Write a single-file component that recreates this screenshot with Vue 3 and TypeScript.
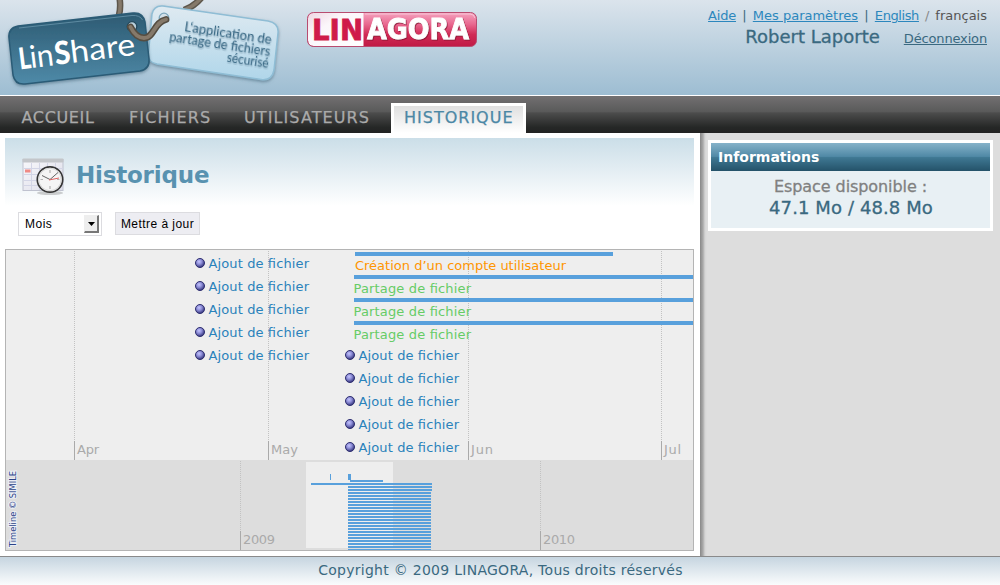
<script setup lang="ts">
interface NavItem {
  label: string
  key: string
  active?: boolean
}

const navItems: NavItem[] = [
  { label: 'ACCUEIL', key: 'home' },
  { label: 'FICHIERS', key: 'files' },
  { label: 'UTILISATEURS', key: 'users' },
  { label: 'HISTORIQUE', key: 'history', active: true },
]

interface PointEvent {
  x: number
  y: number
}

const rowStep = 23
const points: PointEvent[] = [
  ...Array.from({ length: 5 }, (_, i) => ({ x: 200, y: 263 + i * rowStep })),
  ...Array.from({ length: 5 }, (_, i) => ({ x: 350, y: 355 + i * rowStep })),
]

const months = [
  { label: 'Apr', x: 74, width: 22 },
  { label: 'May', x: 268, width: 27 },
  { label: 'Jun', x: 468, width: 22 },
  { label: 'Jul', x: 661, width: 17 },
]

const years = [
  { label: '2009', x: 240 },
  { label: '2010', x: 540 },
]

const shares = [275, 298, 321]
const overviewBars = Array.from({ length: 22 }, (_, i) => ({
  y: 486 + i * 3,
  width: i < 2 ? 84 : 83,
}))
</script>

<template>
  <div class="page">
    <header class="header">
      <svg class="logo" width="290" height="95" viewBox="0 0 290 95">
        <defs>
          <linearGradient id="tagDark" x1="0" y1="0" x2="0" y2="1">
            <stop offset="0" stop-color="#2c5a72" />
            <stop offset="1" stop-color="#4f8aa8" />
          </linearGradient>
          <linearGradient id="tagLight" x1="0" y1="0" x2="0" y2="1">
            <stop offset="0" stop-color="#dfeaf1" />
            <stop offset="1" stop-color="#b0d6ea" />
          </linearGradient>
          <filter id="tagShadow" x="-10%" y="-10%" width="120%" height="130%">
            <feDropShadow dx="0" dy="1.5" stdDeviation="1.5" flood-color="#3f6276" flood-opacity="0.6" />
          </filter>
          <filter id="textShadow" x="-10%" y="-10%" width="120%" height="130%">
            <feDropShadow dx="0.5" dy="1.5" stdDeviation="0.7" flood-color="#5b8098" flood-opacity="0.5" />
          </filter>
        </defs>
        <path d="M119.500 -2 Q121 7 119 15" fill="none" stroke="#5d564b" stroke-width="6.500" />
        <path d="M119.500 -2 Q121 7 119 15" fill="none" stroke="#85796a" stroke-width="3.500" />
        <path d="M202 -3 Q195 6 184 10" fill="none" stroke="#5d564b" stroke-width="6.500" />
        <path d="M202 -3 Q195 6 184 10" fill="none" stroke="#85796a" stroke-width="3.500" />
        <path
          d="M163 6 L268 21 Q279 23 278 33 L274 70 Q272 81 261 79.500 L157 64 Q147 62 148.500 53 L152 14 Q154 5 163 6 Z"
          fill="url(#tagLight)" stroke="#8fbdd5" stroke-width="1.500" filter="url(#tagShadow)"
        />
        <path
          d="M18 26 L133 13 Q143 12 145 22 L149 59 Q150 69 140 71 L25 84 Q15 85 13 75 L9 38 Q8 28 18 26 Z"
          fill="url(#tagDark)" stroke="#2b5b76" stroke-width="1.500" filter="url(#tagShadow)"
        />
        <path d="M19 28 L132 15.500 Q140 15 142.500 20" fill="none" stroke="#5d8ba2" stroke-width="1" />
        <circle cx="132" cy="26.500" r="4.800" fill="#b9cfdb" stroke="#24495c" stroke-width="1.300" />
        <circle cx="164" cy="18" r="4.800" fill="#d2e0e8" stroke="#7ba5ba" stroke-width="1.300" />
        <path d="M130.500 27 Q136 38 144 38 C154 38 154 22 166 19.500" fill="none" stroke="#554d41" stroke-width="6.800" stroke-linecap="round" />
        <path d="M130.500 27 Q136 38 144 38 C154 38 154 22 166 19.500" fill="none" stroke="#85796a" stroke-width="3.800" stroke-linecap="round" />
        <g transform="translate(20 69.500) rotate(-7.200)" class="brand">
          <text x="0" y="0" font-weight="900" font-size="30" textLength="12" lengthAdjust="spacingAndGlyphs">L</text>
          <text x="11" y="0" font-size="31" textLength="24" lengthAdjust="spacingAndGlyphs">in</text>
          <text x="36" y="0" font-weight="900" font-size="32" textLength="16" lengthAdjust="spacingAndGlyphs">S</text>
          <text x="52" y="0" font-size="31" textLength="65" lengthAdjust="spacingAndGlyphs">hare</text>
        </g>
        <g transform="translate(271 44) rotate(8.500)" class="slogan" filter="url(#textShadow)">
          <text x="0" y="0" textLength="88" lengthAdjust="spacingAndGlyphs">L‘application de</text>
          <text x="0.500" y="12" textLength="102" lengthAdjust="spacingAndGlyphs">partage de fichiers</text>
          <text x="0.500" y="24" textLength="42" lengthAdjust="spacingAndGlyphs">sécurisé</text>
        </g>
      </svg>

      <svg class="company" width="172" height="37" viewBox="306 11 172 37">
        <defs>
          <linearGradient id="badgeRed" x1="0" y1="0" x2="0" y2="1">
            <stop offset="0" stop-color="#f5a3bf" />
            <stop offset="0.350" stop-color="#e8678e" />
            <stop offset="0.650" stop-color="#d02a55" />
            <stop offset="1" stop-color="#c01a45" />
          </linearGradient>
          <linearGradient id="badgeWhite" x1="0" y1="0" x2="1" y2="1">
            <stop offset="0" stop-color="#efd6e3" />
            <stop offset="0.350" stop-color="#fbf6fa" />
            <stop offset="1" stop-color="#fff" />
          </linearGradient>
          <filter id="letterShadow" x="-5%" y="-5%" width="110%" height="120%">
            <feDropShadow dx="0.8" dy="1" stdDeviation="0.5" flood-color="#80102f" flood-opacity="0.8" />
          </filter>
        </defs>
        <rect x="307.500" y="12.500" width="169" height="34" rx="6" fill="url(#badgeRed)" />
        <path d="M363.500 13 H314 Q308 13 308 19 V40 Q308 46 314 46 H363.500 Z" fill="url(#badgeWhite)" />
        <rect x="307.500" y="12.500" width="169" height="34" rx="6" fill="none" stroke="#b84c70" stroke-width="1" />
        <path d="M365 14 H470 Q474 14 475 18" fill="none" stroke="#f8c4d5" stroke-width="1" />
        <g class="badge-text">
          <text x="312" y="39.500" fill="#cf1b49" stroke="#cf1b49" textLength="51" lengthAdjust="spacingAndGlyphs">LIN</text>
          <text x="367" y="39" fill="#fff" stroke="#fff" textLength="102" lengthAdjust="spacingAndGlyphs" filter="url(#letterShadow)">AGORA</text>
        </g>
      </svg>

      <div class="account">
        <div class="links">
          <a class="help">Aide</a><span class="bar">|</span><a>Mes paramètres</a><span class="bar">|</span><a class="english">English</a><span class="slash">/</span><span class="current">français</span>
        </div>
        <div class="user">
          <span class="name">Robert Laporte</span>
          <a class="logout">Déconnexion</a>
        </div>
      </div>
    </header>

    <nav class="nav">
      <a v-for="item in navItems" :key="item.key" class="tab" :class="[item.key, { active: item.active }]">{{ item.label }}</a>
    </nav>

    <div class="body">
      <main class="main">
        <div class="title-block">
          <div class="title">
            <svg width="44" height="40" viewBox="0 0 44 40">
              <defs>
                <linearGradient id="sheet" x1="0" y1="0" x2="1" y2="1">
                  <stop offset="0" stop-color="#f8f8fb" />
                  <stop offset="1" stop-color="#dcdce8" />
                </linearGradient>
              </defs>
              <rect x="1" y="2.500" width="40" height="31" fill="url(#sheet)" stroke="#bfc2cf" stroke-width="1" />
              <rect x="0.500" y="1.500" width="41" height="4" rx="1" fill="#c3c6ca" />
              <path d="M2 11.500 H41 M2 17.500 H41 M2 23.500 H41 M2 28.500 H41 M9.500 6 V33 M17.500 6 V33 M25.500 6 V33 M33.500 6 V33" stroke="#d3d5e6" stroke-width="1" />
              <rect x="3" y="12.500" width="5.500" height="3" fill="#f08a85" />
              <ellipse cx="28" cy="36" rx="13" ry="2" fill="#666" opacity="0.300" />
              <circle cx="28" cy="22.500" r="12.700" fill="#f5f5f5" stroke="#353535" stroke-width="1.700" />
              <circle cx="28" cy="22.500" r="11.200" fill="none" stroke="#d6d6d6" stroke-width="1" />
              <path d="M28 13 V16 M28 29 V32 M18.500 22.500 H21 M35 22.500 H37.500" stroke="#b5b5b5" stroke-width="1.200" />
              <path d="M28 22.500 L36 15.500 M28 22.500 L20 18.500" stroke="#555" stroke-width="0.900" />
              <path d="M27 23 L37 21" stroke="#d66" stroke-width="1" />
            </svg>
            <h1>Historique</h1>
          </div>
          <div class="controls">
            <div class="select" role="combobox">
              <span>Mois</span>
              <span class="arrow"><svg width="7" height="4" viewBox="0 0 7 4"><path d="M0 0 H7 L3.500 4 Z" fill="#000" /></svg></span>
            </div>
            <button class="update">Mettre à jour</button>
          </div>
        </div>

        <div class="timeline">
          <svg width="687" height="300" viewBox="6 250 687 300">
            <defs>
              <radialGradient id="dot" cx="0.400" cy="0.350" r="0.650">
                <stop offset="0" stop-color="#c4c4ff" />
                <stop offset="0.450" stop-color="#8f8fd8" />
                <stop offset="1" stop-color="#35357c" />
              </radialGradient>
            </defs>
            <rect x="6" y="250" width="687" height="210" fill="#eee" />
            <rect x="6" y="460" width="687" height="90" fill="#ddd" />
            <rect x="306" y="462" width="87" height="86" fill="#eee" />

            <g v-for="month in months" :key="month.label">
              <path :d="`M${month.x + 0.5} 251 V441`" class="dotted" />
              <rect :x="month.x" y="441" width="1" height="19" fill="#aaa" />
              <text :x="month.x + 3" y="454" class="scale" :textLength="month.width">{{ month.label }}</text>
            </g>
            <g v-for="year in years" :key="year.label">
              <path :d="`M${year.x + 0.5} 461 V531`" class="dotted" />
              <rect :x="year.x" y="531" width="1" height="19" fill="#aaa" />
              <text :x="year.x + 3" y="544" class="scale" textLength="32">{{ year.label }}</text>
            </g>

            <g v-for="(point, index) in points" :key="index">
              <circle :cx="point.x" :cy="point.y" r="4.500" fill="url(#dot)" stroke="#2e2e70" stroke-width="1" />
              <text :x="point.x + 8.5" :y="point.y + 5" class="label upload" textLength="100.500">Ajout de fichier</text>
            </g>

            <rect x="355" y="252" width="258" height="4" class="band" />
            <text x="355" y="270" class="label account-created" textLength="211">Création d’un compte utilisateur</text>
            <g v-for="y in shares" :key="y">
              <rect x="354" :y="y" width="339" height="4" class="band" />
              <text x="353.500" :y="y + 18" class="label shared" textLength="117.500">Partage de fichier</text>
            </g>

            <g class="band">
              <rect x="330" y="474" width="1" height="6" />
              <rect x="348" y="474" width="3" height="6" />
              <rect x="350" y="480" width="33" height="2" />
              <rect x="311" y="483" width="121" height="2" />
              <rect v-for="bar in overviewBars" :key="bar.y" x="348" :y="bar.y" :width="bar.width" height="2" />
            </g>

            <text transform="translate(16 547) rotate(-90)" class="credit" textLength="76" lengthAdjust="spacingAndGlyphs">Timeline © SIMILE</text>
          </svg>
        </div>
      </main>

      <aside class="side">
        <section class="panel">
          <h2>Informations</h2>
          <div class="panel-body">
            <div class="caption">Espace disponible :</div>
            <div class="quota">47.1 Mo / 48.8 Mo</div>
          </div>
        </section>
      </aside>
    </div>

    <footer class="footer">Copyright © 2009 LINAGORA, Tous droits réservés</footer>
  </div>
</template>

<style>
body {
  margin: 0;
  overflow: hidden;
}
</style>

<style scoped>
.page {
  display: flex;
  flex-direction: column;
  width: 1000px;
  height: 585px;
  overflow: hidden;
  background: #fff;
  font-family: Verdana, "DejaVu Sans", sans-serif;
}

.header {
  display: flex;
  flex: none;
  height: 95px;
  background: linear-gradient(#dbe4ec, #9dbdd2);
  border-bottom: 1px solid #fff;
}

.logo {
  flex: none;
}

.brand {
  font-family: Lato, sans-serif;
  fill: #fff;
}

.slogan {
  font-family: Lato, sans-serif;
  font-size: 12.500px;
  fill: #386884;
  text-anchor: end;
}

.company {
  flex: none;
  margin: 11px 0 0 16px;
}

.badge-text {
  font-family: "DejaVu Sans", sans-serif;
  font-size: 28px;
  font-weight: 700;
  stroke-width: 0.800;
}

.account {
  flex: 1;
  padding-right: 13px;
  color: #3a6980;
  text-align: right;
  white-space: nowrap;
}

.links {
  height: 16px;
  margin-top: 8px;
  font-size: 13px;
  line-height: 16px;
}

.links a {
  color: #2c87bd;
  text-decoration: underline;
}

.links .help {
  letter-spacing: -0.200px;
}

.links .english {
  letter-spacing: -0.400px;
}

.bar {
  margin: 0 6.200px;
}

.slash {
  margin: 0 6px;
  color: #888;
}

.current {
  color: #555;
}

.user {
  display: flex;
  justify-content: flex-end;
  align-items: baseline;
  gap: 24px;
  height: 24px;
  margin-top: 1px;
  line-height: 24px;
}

.name {
  font-size: 18px;
  -webkit-text-stroke: 0.300px #3a6980;
}

.logout {
  font-size: 13px;
  letter-spacing: -0.150px;
  text-decoration: underline;
}

.nav {
  display: flex;
  flex: none;
  align-items: flex-end;
  height: 37px;
  padding-left: 9px;
  background: linear-gradient(#727071, #5a5a5a 42%, #4c4c4c 46%, #252726 85%, #222);
}

.tab {
  box-sizing: border-box;
  height: 30px;
  border: 3px solid transparent;
  border-bottom: 0;
  color: #aaa;
  font-size: 16px;
  line-height: 23px;
  padding-left: 10px;
  white-space: nowrap;
  -webkit-text-stroke: 0.250px currentColor;
}

.home {
  width: 107px;
  padding-left: 9.500px;
  letter-spacing: 0.650px;
}

.files {
  width: 115px;
  letter-spacing: 1.150px;
}

.users {
  width: 160px;
  letter-spacing: 1.100px;
}

.history {
  width: 135px;
  letter-spacing: 1px;
}

.tab.active {
  border-color: #fff;
  background: linear-gradient(#dfdfdf, #fff);
  background-clip: padding-box;
  color: #4b87a5;
}

.body {
  display: flex;
  flex: none;
  height: 423px;
}

.main {
  box-sizing: border-box;
  width: 700px;
  padding: 5px 6px 5px 5px;
  background: #fff;
}

.title-block {
  height: 111px;
  background: linear-gradient(#cbdee8, #fff 68px);
}

.title {
  display: flex;
  align-items: center;
  height: 74px;
  padding-left: 17px;
}

.title svg {
  margin-top: 4px;
}

.title h1 {
  margin: 0 0 1px 10px;
  color: #5892b0;
  font-size: 23px;
  line-height: 28px;
  letter-spacing: -0.200px;
}

.controls {
  display: flex;
  gap: 13px;
  padding-left: 13px;
  font: 12px "Liberation Sans", sans-serif;
}

.select {
  box-sizing: border-box;
  display: flex;
  align-items: center;
  justify-content: space-between;
  width: 84px;
  height: 24px;
  padding: 0 2px 0 6px;
  border: 1px solid #dcdce0;
  background: #fff;
  letter-spacing: 0.500px;
}

.arrow {
  box-sizing: border-box;
  display: flex;
  align-items: center;
  justify-content: center;
  width: 15px;
  height: 18px;
  border: solid #eee;
  border-width: 1px 2px 2px 1px;
  border-right-color: #777;
  border-bottom-color: #777;
  background: #eee;
}

.update {
  box-sizing: border-box;
  width: 85px;
  height: 23px;
  padding: 0;
  border: 1px solid #dcdce0;
  background: #ededf2;
  color: #000;
  font: 12px "Liberation Sans", sans-serif;
  letter-spacing: 0.450px;
}

.timeline {
  box-sizing: border-box;
  width: 689px;
  height: 302px;
  border: 1px solid #b4b4b4;
}

.timeline svg {
  display: block;
}

.dotted {
  stroke: #c2c2c2;
  stroke-width: 1;
  stroke-dasharray: 1 1;
}

.scale {
  fill: #aaa;
  font-size: 13px;
}

.label {
  font-size: 13px;
}

.upload {
  fill: #2a82bb;
}

.account-created {
  fill: #ff9500;
}

.shared {
  fill: #66cc66;
}

.band {
  fill: #58a0dc;
}

.credit {
  font-family: "DejaVu Sans", sans-serif;
  font-size: 9px;
  fill: #2c4488;
  stroke: #eef0f6;
  stroke-width: 2;
  paint-order: stroke;
}

.side {
  box-sizing: border-box;
  flex: 1;
  padding: 7px 7px 0 8px;
  background: linear-gradient(to right, #888, #aaa 3px, #d5d5d5 5px, #ddd 7px);
}

.panel {
  border: 3px solid #fff;
  background: #e8f0f4;
}

.panel h2 {
  height: 28px;
  margin: 0;
  padding-left: 7px;
  background: linear-gradient(#85b2c9, #5089a6 48%, #3f7893 52%, #245269);
  color: #fff;
  font-size: 14px;
  line-height: 28px;
}

.panel-body {
  height: 57px;
  text-align: center;
}

.caption {
  padding-top: 5px;
  color: #808080;
  font-size: 16px;
  line-height: 21px;
  letter-spacing: -0.080px;
  -webkit-text-stroke: 0.300px #808080;
}

.quota {
  padding-left: 1px;
  color: #3a6980;
  font-size: 18px;
  line-height: 22px;
  letter-spacing: 0.100px;
  -webkit-text-stroke: 0.300px #3a6980;
}

.footer {
  box-sizing: border-box;
  flex: none;
  height: 29px;
  padding-left: 1px;
  border-top: 1px solid #8a8a8a;
  background: linear-gradient(#c6d5e0, #fafcfd);
  color: #3a6980;
  font-size: 14px;
  line-height: 26px;
  text-align: center;
  letter-spacing: 0.270px;
}
</style>
